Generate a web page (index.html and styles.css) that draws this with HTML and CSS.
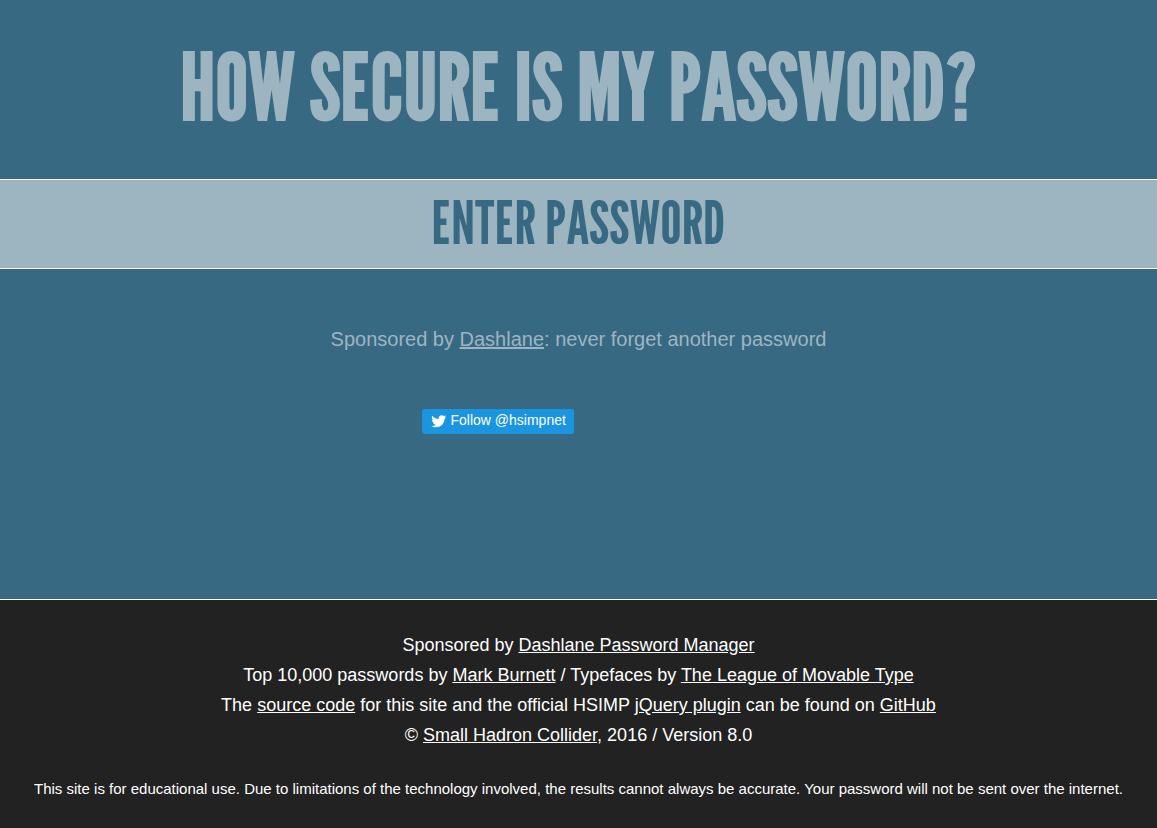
FILE: index.html
```html
<!DOCTYPE html>
<html lang="en">
<head>
<meta charset="utf-8">
<meta name="viewport" content="width=device-width, initial-scale=1">
<title>How Secure Is My Password?</title>
<link rel="stylesheet" href="styles.css">
</head>
<body class="page">
<main class="main">
  <h1 class="title">How Secure Is My Password?</h1>
  <input class="password" type="password" placeholder="ENTER PASSWORD" aria-label="Enter password">
  <p class="sponsor">Sponsored by <a href="#dashlane">Dashlane</a>: never forget another password</p>
  <div class="social">
    <a class="follow" href="#follow">
      <svg class="bird" viewBox="0 0 72 72" aria-hidden="true"><path fill="#fff" d="M68.812 15.14c-2.348 1.04-4.87 1.744-7.52 2.06 2.704-1.62 4.78-4.186 5.757-7.243-2.53 1.5-5.33 2.592-8.314 3.176C56.35 10.59 52.948 9 49.182 9c-7.23 0-13.092 5.86-13.092 13.093 0 1.026.118 2.02.338 2.98C25.543 24.527 15.9 19.318 9.44 11.396c-1.125 1.936-1.77 4.184-1.77 6.58 0 4.543 2.312 8.552 5.824 10.9-2.146-.07-4.165-.658-5.93-1.64-.002.056-.002.11-.002.163 0 6.345 4.513 11.638 10.504 12.84-1.1.298-2.256.457-3.45.457-.845 0-1.666-.078-2.464-.23 1.667 5.2 6.5 8.985 12.23 9.09-4.482 3.51-10.13 5.605-16.26 5.605-1.055 0-2.096-.06-3.122-.184 5.794 3.717 12.676 5.882 20.067 5.882 24.083 0 37.25-19.95 37.25-37.25 0-.565-.013-1.133-.038-1.693 2.558-1.847 4.778-4.15 6.532-6.774z"/></svg>
      <span>Follow @hsimpnet</span>
    </a>
  </div>
</main>
<footer class="footer">
  <p>Sponsored by <a href="#manager">Dashlane Password Manager</a></p>
  <p>Top 10,000 passwords by <a href="#burnett">Mark Burnett</a> / Typefaces by <a href="#league">The League of Movable Type</a></p>
  <p>The <a href="#source">source code</a> for this site and the official HSIMP <a href="#plugin">jQuery plugin</a> can be found on <a href="#github">GitHub</a></p>
  <p>© <a href="#shc">Small Hadron Collider</a>, 2016 / Version 8.0</p>
  <p class="notice">This site is for educational use. Due to limitations of the technology involved, the results cannot always be accurate. Your password will not be sent over the internet.</p>
</footer>
</body>
</html>
```
FILE: styles.css
```css
* {
  box-sizing: border-box;
}

.page {
  display: flex;
  flex-direction: column;
  min-height: 100vh;
  margin: 0;
  background: #386983;
  color: #9db5c1;
  font-family: "Liberation Sans", Arial, sans-serif;
  text-align: center;
}

.page p {
  margin: 0;
}

.page a {
  color: inherit;
}

.main {
  flex: 1;
}

.title,
.password {
  font-family: "League Gothic", "Liberation Sans Narrow", "Liberation Sans", sans-serif;
  font-weight: 400;
}

.title {
  margin: 0;
  padding: 41px 16px 48px;
  font-size: 92px;
  line-height: 90px;
  text-transform: uppercase;
  -webkit-text-stroke: 2px #9db5c1;
}

.password {
  display: block;
  width: 100%;
  height: 90px;
  padding: 0 16px 4px;
  border: 0;
  border-top: 1px solid #fff;
  border-bottom: 1px solid #fff;
  border-radius: 0;
  outline: 0;
  background: #9db5c1;
  color: #386983;
  font-size: 60px;
  text-align: center;
}

.password::placeholder {
  color: #386983;
  opacity: 1;
}

.sponsor {
  padding: 55px 16px;
  font-size: 20px;
  line-height: 30px;
}

.social {
  display: flex;
  max-width: 314px;
  margin: 0 auto;
}

.page .follow {
  display: flex;
  align-items: center;
  gap: 4px;
  height: 25px;
  padding: 0 8px;
  border-radius: 3px;
  background: #1b95e0;
  color: #fff;
  font-size: 14px;
  line-height: 22px;
  text-decoration: none;
}

.follow span {
  padding-bottom: 3px;
}

.bird {
  width: 17px;
  height: 17px;
}

.footer {
  padding: 30px 16px 24px;
  border-top: 1px solid #fff;
  background: #222;
  color: #fff;
  font-size: 18px;
  line-height: 30px;
}

.footer .notice {
  padding-top: 24px;
  font-size: 15px;
}
```
